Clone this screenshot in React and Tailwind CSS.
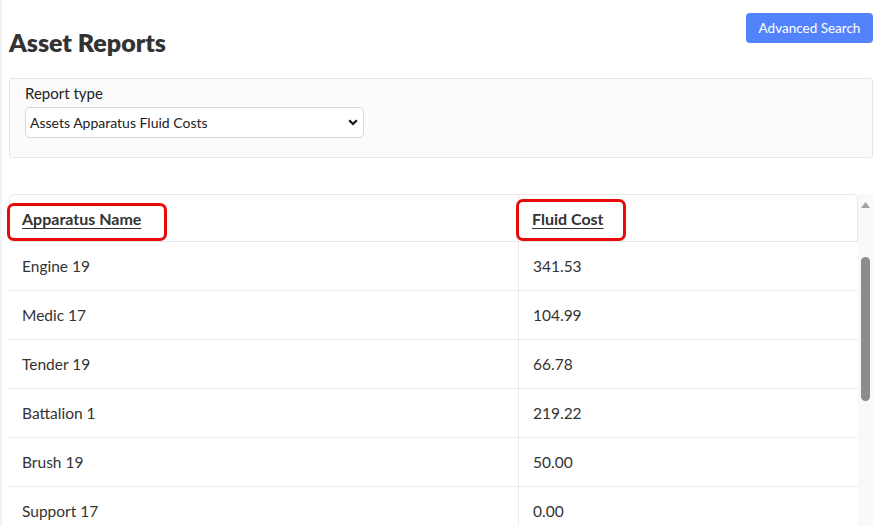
import React from "react";

const rows = [
  ["Engine 19", "341.53"],
  ["Medic 17", "104.99"],
  ["Tender 19", "66.78"],
  ["Battalion 1", "219.22"],
  ["Brush 19", "50.00"],
  ["Support 17", "0.00"],
];

export default function App() {
  return (
    <div
      className="w-[877px] h-[526px] overflow-hidden bg-white border-l-[2px] border-[#f3f3f3] pl-[7px] pr-[4px] text-[#333333]"
      style={{ fontFamily: "Lato, 'Open Sans', 'Liberation Sans', sans-serif" }}
    >
      <div className="flex justify-between items-start pt-[13px]">
        <h1 className="mt-[14px] text-[25px] leading-[30px] font-extrabold text-[#333333]">
          Asset Reports
        </h1>
        <button className="w-[127px] h-[30px] rounded-[4px] bg-[#5283fc] text-white text-[13.5px] leading-[30px] text-center">
          Advanced Search
        </button>
      </div>

      <div className="mt-[21px] border border-[#e6e6e6] rounded-[3px] bg-[#fbfbfb] pl-[15px] pt-[5px] pb-[19px]">
        <div className="text-[15px] leading-[18px] mb-[5px] text-[#222]">Report type</div>
        <div className="relative w-[339px] h-[31px]">
          <div className="w-full h-full border border-[#d9d9d9] rounded-[5px] bg-white text-[14px] leading-[29px] pl-[4px] text-[#222]">
            Assets Apparatus Fluid Costs
          </div>
          <svg
            className="absolute right-[6px] top-[12px]"
            width="10"
            height="7"
            viewBox="0 0 10 7"
          >
            <path d="M1.2 1.2 L5 5 L8.8 1.2" stroke="#111" strokeWidth="2.2" fill="none" />
          </svg>
        </div>
      </div>

      <div className="mt-[36px] flex">
        <div className="w-[849px]">
          <div className="flex h-[48px] border border-[#e8e8e8] rounded-t-[5px]">
            <div className="relative w-[509px] border-r border-[#e8e8e8] flex items-center pl-[12px] pt-[2px]">
              <span className="text-[16px] font-bold underline underline-offset-[3px]">Apparatus Name</span>
              <div className="absolute left-[-3px] top-[8px] w-[160px] h-[38px] border-[3px] border-[#e60a0a] rounded-[7px]" />
            </div>
            <div className="relative flex-1 flex items-center pl-[13px] pt-[2px]">
              <span className="text-[16px] font-bold underline underline-offset-[3px]">Fluid Cost</span>
              <div className="absolute left-[-3px] top-[4px] w-[110px] h-[42px] border-[3px] border-[#e60a0a] rounded-[7px]" />
            </div>
          </div>
          {rows.map(([name, cost]) => (
            <div key={name} className="flex h-[49px] border-b border-[#ebebeb]">
              <div className="w-[510px] border-r border-[#ebebeb] flex items-center pl-[13px] pt-[2px] text-[15.5px]">
                {name}
              </div>
              <div className="flex-1 flex items-center pl-[14px] pt-[2px] text-[15.5px]">{cost}</div>
            </div>
          ))}
        </div>
        <div className="w-[15px] bg-[#f9f9f9] flex flex-col items-center">
          <svg className="mt-[8px]" width="9" height="6" viewBox="0 0 9 6">
            <path d="M4.5 0 L9 6 L0 6 Z" fill="#a3a3a3" />
          </svg>
          <div className="mt-[49px] w-[9px] h-[144px] rounded-full bg-[#8c8c8c]" />
        </div>
      </div>
    </div>
  );
}
